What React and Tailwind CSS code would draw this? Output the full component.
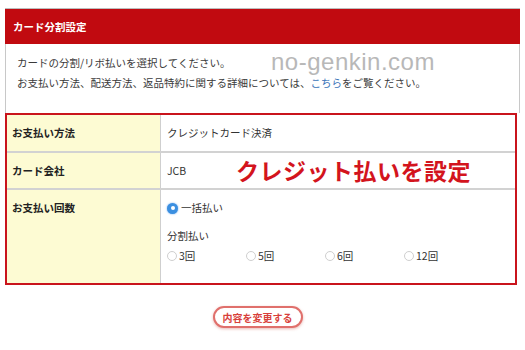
export default function App() {
  const font = { fontFamily: '"Noto Sans CJK JP", "Noto Sans", sans-serif' };
  const Radio = ({ checked }) =>
    checked ? (
      <span className="inline-flex w-[11px] h-[11px] rounded-full bg-[#3b8fe0] items-center justify-center shadow-[0_0_2px_#6aa8ef]">
        <span className="w-[4px] h-[4px] rounded-full bg-white" />
      </span>
    ) : (
      <span className="inline-block w-[10px] h-[10px] rounded-full border border-[#cfcfcf] bg-white" />
    );
  return (
    <div className="w-[525px] h-[350px] bg-white overflow-hidden text-[#333]" style={font}>
      <div className="pt-[8px] px-[5px]">
        <div className="border-t border-[#bdbdbd]">
          <div className="h-[35px] bg-[#c10a10] flex items-center pl-[8px] text-white font-bold text-[10.5px]">
            カード分割設定
          </div>
        </div>
        <div className="h-[69px] border-x border-[#c8c8c8] pl-[11px] pt-[9px] relative text-[10.5px] leading-[20px] text-[#3a3a3a]">
          <div>カードの分割/リボ払いを選択してください。</div>
          <div>
            お支払い方法、配送方法、返品特約に関する詳細については、
            <span className="text-[#3b74b8]">こちら</span>をご覧ください。
          </div>
          <div
            className="absolute left-[265px] top-[8px] text-[24px] text-[#b8b8b8] tracking-[0.5px]"
            style={{ fontFamily: '"Liberation Sans", Arial, sans-serif' }}
          >
            no-genkin.com
          </div>
        </div>
        <div className="border-2 border-[#c9141c] w-[512px] text-[10.5px]">
          <div className="flex h-[38px] border-b-2 border-[#d2d2d2]">
            <div className="w-[154px] bg-[#fdfbd3] border-r border-[#cfcfcf] flex items-center pl-[5px] font-bold text-[#222]">
              お支払い方法
            </div>
            <div className="flex-1 flex items-center pl-[6px]">クレジットカード決済</div>
          </div>
          <div className="flex h-[37px] border-b-2 border-[#d2d2d2]">
            <div className="w-[154px] bg-[#fdfbd3] border-r border-[#cfcfcf] flex items-center pl-[5px] font-bold text-[#222]">
              カード会社
            </div>
            <div className="flex-1 flex items-center pl-[6px]">
              <span className="w-[69px]">JCB</span>
              <span className="text-[23px] font-bold text-[#d3141d] tracking-[0.5px] leading-none">
                クレジット払いを設定
              </span>
            </div>
          </div>
          <div className="flex h-[93px]">
            <div className="w-[154px] bg-[#fdfbd3] border-r border-[#cfcfcf] pl-[5px] pt-[10px] font-bold text-[#222]">
              お支払い回数
            </div>
            <div className="flex-1 pl-[6px] pt-[11px]">
              <div className="flex items-center gap-[3px] h-[14px]">
                <Radio checked />
                <span>一括払い</span>
              </div>
              <div className="mt-[14px] h-[14px] flex items-center">分割払い</div>
              <div className="flex mt-[6px] h-[14px] items-center">
                {["3回", "5回", "6回", "12回"].map((t) => (
                  <div key={t} className="w-[79px] flex items-center gap-[2px]">
                    <Radio />
                    <span>{t}</span>
                  </div>
                ))}
              </div>
            </div>
          </div>
        </div>
        <div className="flex justify-center pt-[21px] pr-[10px]">
          <div className="h-[22px] px-[8px] rounded-full border-2 border-[#e0706c] bg-white text-[#d8403a] font-bold text-[10px] flex items-center shadow-[0_1px_3px_rgba(200,80,70,0.4)]">
            内容を変更する
          </div>
        </div>
      </div>
    </div>
  );
}
